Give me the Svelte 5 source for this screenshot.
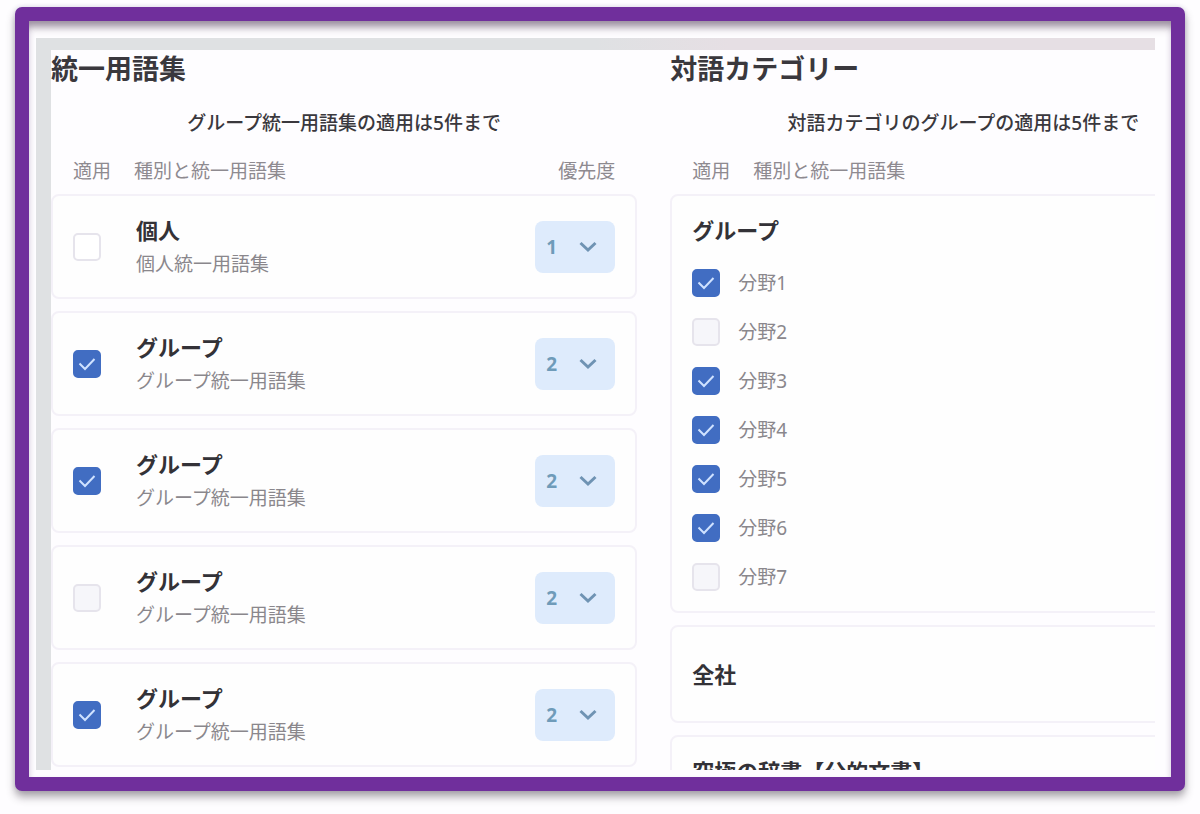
<script>
  let glossaries = $state([
    { kind: '個人', name: '個人統一用語集', applied: false, open: true, priority: 1 },
    { kind: 'グループ', name: 'グループ統一用語集', applied: true, priority: 2 },
    { kind: 'グループ', name: 'グループ統一用語集', applied: true, priority: 2 },
    { kind: 'グループ', name: 'グループ統一用語集', applied: false, priority: 2 },
    { kind: 'グループ', name: 'グループ統一用語集', applied: true, priority: 2 }
  ]);

  let fields = $state([
    { name: '分野1', applied: true },
    { name: '分野2', applied: false },
    { name: '分野3', applied: true },
    { name: '分野4', applied: true },
    { name: '分野5', applied: true },
    { name: '分野6', applied: true },
    { name: '分野7', applied: false }
  ]);
</script>

{#snippet tick()}
  <svg class="tick" viewBox="0 0 28 28" aria-hidden="true">
    <path d="M6.5 13.5 L12 19 L21.5 9" />
  </svg>
{/snippet}

<div class="frame" lang="ja">
  <main class="sheet">
    <section class="column">
      <h2>統一用語集</h2>
      <p class="note">グループ統一用語集の適用は5件まで</p>
      <div class="heads">
        <span>適用</span>
        <span>種別と統一用語集</span>
        <span class="last">優先度</span>
      </div>
      <ul class="stack">
        {#each glossaries as item, i}
          <li class="card row">
            <span class="box">
              <input type="checkbox" id="glossary-{i}" class:open={item.open} bind:checked={item.applied} />
              {@render tick()}
            </span>
            <label class="names" for="glossary-{i}">
              <strong>{item.kind}</strong>
              <span>{item.name}</span>
            </label>
            <span class="priority">
              <select aria-label="優先度" bind:value={item.priority}>
                {#each [1, 2, 3, 4, 5] as n}
                  <option value={n}>{n}</option>
                {/each}
              </select>
              <svg class="chevron" viewBox="0 0 18 12" aria-hidden="true">
                <path d="M1.5 2 L9 9 L16.5 2" />
              </svg>
            </span>
          </li>
        {/each}
      </ul>
    </section>

    <section class="column">
      <h2>対語カテゴリー</h2>
      <p class="note">対語カテゴリのグループの適用は5件まで</p>
      <div class="heads">
        <span>適用</span>
        <span>種別と統一用語集</span>
      </div>
      <div class="stack">
        <div class="card group">
          <h3>グループ</h3>
          <ul class="fields">
            {#each fields as field, i}
              <li>
                <span class="box">
                  <input type="checkbox" id="field-{i}" bind:checked={field.applied} />
                  {@render tick()}
                </span>
                <label for="field-{i}">{field.name}</label>
              </li>
            {/each}
          </ul>
        </div>
        <div class="card company"><h3>全社</h3></div>
        <div class="card group"><h3>究極の辞書【公的文書】</h3></div>
      </div>
    </section>
  </main>
</div>

<style>
  :global(body) {
    margin: 0;
    background: #fefdff;
  }

  .frame {
    box-sizing: border-box;
    height: calc(100vh - 30px);
    margin: 7px 15px 23px;
    padding: 17px 16px 7px 7px;
    border: 14px solid #702f9c;
    border-radius: 7px;
    background: #fefdff;
    box-shadow:
      0 6px 8px rgba(60, 50, 60, 0.42),
      0 0 5px rgba(90, 80, 150, 0.2),
      inset 0 11px 8px -5px rgba(70, 50, 70, 0.45),
      inset 0 4px 6px rgba(90, 60, 130, 0.2);
    font-family: 'Noto Sans', 'Noto Sans CJK JP', sans-serif;
    color: #3a383d;
  }

  .sheet {
    box-sizing: border-box;
    display: flex;
    gap: 33px;
    height: 100%;
    overflow: hidden;
    border-top: 12px solid;
    border-left: 15px solid #e0e1e4;
    border-image: linear-gradient(90deg, #dfe1e3 50%, #e6dfe4 62%) 12 0 0 15;
    background: #fefdff;
  }

  .column {
    flex: 0 0 53.1%;
    min-width: 0;
  }

  h2 {
    margin: 0;
    font-size: 27px;
    line-height: 38px;
    font-weight: 700;
  }

  .note {
    margin: 21px 0 20px;
    font-size: 19px;
    line-height: 28px;
    font-weight: 500;
    text-align: center;
  }

  .heads {
    display: flex;
    gap: 23px;
    margin-bottom: 9px;
    padding: 0 22px;
    font-size: 19px;
    line-height: 28px;
    color: #8e8a90;
  }

  .last {
    margin-left: auto;
  }

  ul {
    margin: 0;
    padding: 0;
    list-style: none;
  }

  .stack {
    display: flex;
    flex-direction: column;
    gap: 12px;
  }

  .card {
    box-sizing: border-box;
    padding: 20px;
    border: 2px solid #f4f1f8;
    border-radius: 8px;
    background: #fefefe;
  }

  .row {
    display: flex;
    align-items: center;
    gap: 35px;
    height: 105px;
  }

  .names {
    display: flex;
    flex: 1;
    flex-direction: column;
    gap: 6px;
    font-size: 19px;
    line-height: 28px;
    color: #8a878c;
  }

  strong,
  h3 {
    margin: 0;
    font-size: 22px;
    line-height: 28px;
    font-weight: 700;
    color: #333237;
  }

  .box,
  .priority {
    display: grid;
    align-items: center;
  }

  .box > *,
  .priority > * {
    grid-area: 1 / 1;
  }

  input {
    appearance: none;
    box-sizing: border-box;
    width: 28px;
    height: 28px;
    margin: 0;
    border: 2px solid #e6e4ec;
    border-radius: 5px;
    background: #f6f6fa;
  }

  input.open {
    background: #fff;
  }

  input:checked {
    border-color: #416dc2;
    background: #416dc2;
  }

  .tick {
    width: 28px;
    height: 28px;
    pointer-events: none;
    visibility: hidden;
  }

  input:checked + .tick {
    visibility: visible;
  }

  .tick path {
    fill: none;
    stroke: #cfe2ff;
    stroke-width: 2;
  }

  select {
    appearance: none;
    width: 80px;
    height: 52px;
    margin: 0;
    padding: 0 11px;
    border: 0;
    border-radius: 8px;
    background: #deebfc;
    font-family: inherit;
    font-size: 19px;
    font-weight: 700;
    color: #6f9bb9;
  }

  .chevron {
    justify-self: end;
    width: 18px;
    height: 12px;
    margin-right: 18px;
    pointer-events: none;
  }

  .chevron path {
    fill: none;
    stroke: #6f93b3;
    stroke-width: 3;
  }

  .company {
    display: flex;
    align-items: center;
    height: 98px;
  }

  .fields {
    display: flex;
    flex-direction: column;
    gap: 21px;
    margin-top: 25px;
  }

  .fields li {
    display: flex;
    align-items: center;
    gap: 18px;
    font-size: 19px;
    line-height: 28px;
    color: #8a878c;
  }
</style>
